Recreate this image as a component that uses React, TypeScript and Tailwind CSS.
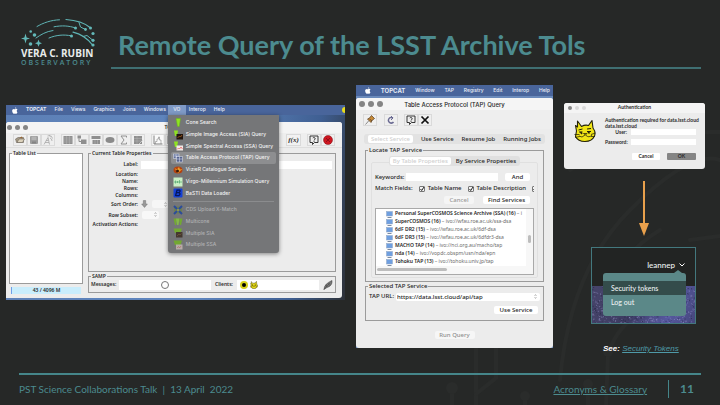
import React from "react";

const lucida = "font-['Noto_Sans','Open_Sans',sans-serif]";

/* ---------- drawings ---------- */

function RubinLogo() {
  return (
    <svg viewBox="0 0 74 29" className="w-full h-auto block" fill="none" stroke="#5fb4b5" strokeLinecap="round" strokeWidth="1" aria-hidden="true">
      <path d="M16 8.500C22 5 30 2 38.500 1.800" />
      <path d="M45 1.500C55 2.200 63 4.500 69 9.500" strokeWidth="1.200" />
      <path d="M33 8.800C41 7.200 48 7.800 54 9.800" />
      <path d="M15 20C20 16.500 25 13.500 32 12.500" />
      <path d="M28 20C35 17 43 16.300 50 17.800" />
      <path d="M52 14.200C60 16 66 20 71.500 27" strokeWidth="1.200" />
      <path d="M58 4.500L59.500 9L64.500 11.500M62 18.500L66 17.500L71.500 22" />
      <g fill="#63b8b8" stroke="none">
        <circle cx="54.500" cy="10" r="1.500" /><circle cx="50.500" cy="18" r="1.500" />
        <circle cx="64.500" cy="11.500" r="1.400" /><circle cx="69.500" cy="10" r="1.500" />
        <circle cx="72" cy="15.500" r="1.600" /><circle cx="72" cy="22.300" r="1.600" />
        <circle cx="72" cy="27" r="1.600" />
        <circle cx="9.700" cy="13.500" r="1.300" /><circle cx="13.500" cy="17" r="1.800" />
        <circle cx="9.500" cy="26" r="1.800" />
        <path d="M4.500 15.500L5.600 19.400L9 20.500L5.600 21.600L4.500 25.500L3.400 21.600L0 20.500L3.400 19.400Z" />
        <path d="M17.500 21.500L18.500 24.200L21 25.200L18.500 26.200L17.500 28.800L16.500 26.200L14 25.200L16.500 24.200Z" />
      </g>
    </svg>
  );
}

function Backdrop() {
  return (
    <svg viewBox="0 0 720 405" preserveAspectRatio="xMaxYMax slice" className="absolute inset-0 w-full h-full" fill="none" stroke="#2a2c2b" strokeWidth="4" strokeLinecap="round" aria-hidden="true">
      <path d="M476 405V350Q476 270 540 205" />
      <path d="M452 405V390M476 394L496 378V340" />
      <path d="M525 405V398M588 405V386M606 405L608 355Q620 310 690 290" />
      <path d="M560 380Q570 270 630 210T720 160" />
      <path d="M570 170Q630 130 720 132M600 320Q610 260 660 230M690 240L720 236" />
      <g fill="#2a2c2b" stroke="none">
        <circle cx="452" cy="388" r="6" /><circle cx="525" cy="396" r="5" />
        <circle cx="588" cy="384" r="5" /><circle cx="608" cy="352" r="5" />
      </g>
    </svg>
  );
}

function Apple() {
  return (
    <svg viewBox="0 0 12 14" className="w-[6px] h-[7px] shrink-0" fill="#fff" aria-hidden="true">
      <path d="M8.300 0.300C8.400 1.900 7.200 3.200 5.900 3.200C5.700 1.800 7 0.500 8.300 0.300ZM10.900 10.400C10.300 12 9.300 13.600 8.200 13.600C7.300 13.600 7 13.100 6 13.100C5 13.100 4.600 13.600 3.800 13.600C2.100 13.600 0.300 10.300 0.300 7.700C0.300 5.200 1.900 3.800 3.500 3.800C4.600 3.800 5.300 4.500 6 4.500C6.700 4.500 7.600 3.700 8.800 3.700C9.700 3.700 10.500 4.200 11 5C8.900 6.200 9.200 9.400 10.900 10.400Z" />
    </svg>
  );
}

function ToolIcon({ kind }: { kind: string }) {
  const g = "#8f8f8f";
  return (
    <svg viewBox="0 0 20 20" className="w-[10px] h-[10px] shrink-0" aria-hidden="true">
      {kind === "open" && <g><path d="M1 8L6 5H17V15H3Z" fill="#a59a86" stroke="#5c554c" /><path d="M4 15L8 8H19L15 15Z" fill="#ddd3bd" stroke="#5c554c" /><path d="M9 5L14 3L15 7Z" fill="#963" /></g>}
      {kind === "save" && <g><rect x="2" y="2" width="16" height="16" rx="2" fill="#9d9d9d" /><rect x="5" y="3" width="10" height="7" fill="#b4b4b4" /><rect x="6" y="13" width="8" height="4" fill="#858585" /></g>}
      {kind === "broadcast" && <g fill="none" stroke="#a5a5a5" strokeWidth="1.500"><path d="M2 19L10 5L13 19M4 15H12M6 11H11" /><path d="M9 2Q13 0 15 3M14 6Q18 7 18 12M12 1Q18 1 19 7" /></g>}
      {kind === "grid" && <g><rect x="1" y="2" width="18" height="16" fill={g} /><path d="M1 6H19M1 10H19M1 14H19M7 2V18M13 2V18" stroke="#b4b4b4" /></g>}
      {kind === "link" && <g fill={g}><rect x="1" y="1" width="7" height="6" /><rect x="8" y="9" width="11" height="9" /><path d="M4 7V13H8" fill="none" stroke={g} strokeWidth="2" /></g>}
      {kind === "columns" && <g><rect x="1" y="2" width="18" height="6" fill={g} /><rect x="3" y="10" width="15" height="8" fill={g} /><path d="M8 10V18M13 10V18" stroke="#bbb" /></g>}
      {kind === "oval" && <ellipse cx="10" cy="10" rx="9" ry="6" fill="#8a8a8a" />}
      {kind === "sum" && <path d="M15 5V2H4L10 10L4 18H15V15" fill="none" stroke="#888" strokeWidth="1.800" />}
      {kind === "match" && <g><rect x="2" y="2" width="16" height="16" fill={g} /><path d="M2 7H18M2 12H18M8 2V18" stroke="#b4b4b4" /><path d="M12 18L19 11" stroke="#ccc" strokeWidth="2" /></g>}
      {kind === "histogram" && <g><rect x="0" y="0" width="20" height="20" fill="#fafafa" /><path d="M2 1V18H19" fill="none" stroke="#555" strokeWidth="1.500" /><path d="M5 18V13H8V8H11V4H13V10H16V18" fill="none" stroke="#777" /></g>}
      {kind === "help" && <g fill="none" stroke="#222" strokeWidth="1.800"><path d="M2 2H18V15H11L7 19V15H2Z" /><path d="M7.500 6Q10 3.500 12 6T10 10V11M10 12V14" strokeWidth="1.500" /></g>}
      {kind === "stop" && <g><circle cx="10" cy="10" r="9" fill="#cf1620" stroke="#7a1015" /><path d="M6 6L14 14M14 6L6 14" stroke="#8f1018" strokeWidth="2" /></g>}
      {kind === "pin" && <g><path d="M1 19L8 11" stroke="#8a8a8a" strokeWidth="2" /><path d="M5 8L9 6L13 1L19 7L14 11L12 15Z" fill="#c88a35" stroke="#5b4126" strokeWidth="1.500" /><path d="M9 8L14 12" stroke="#6b4c2c" strokeWidth="2" /></g>}
      {kind === "reload" && <g fill="none" stroke="#6a6a92" strokeWidth="3"><path d="M14 6Q8 3 5.500 8T9 16Q13 17 15 14" /><path d="M10 10L14 6L10 2" strokeWidth="2" /></g>}
      {kind === "close" && <path d="M3 3L17 17M17 3L3 17" stroke="#111" strokeWidth="3.500" />}
    </svg>
  );
}

function MenuIcon({ kind }: { kind: string }) {
  return (
    <svg viewBox="0 0 20 20" className="w-[10px] h-[10px] shrink-0" aria-hidden="true">
      {kind === "cone" && <path d="M6 1H15L12.500 17H9Z" fill="#8fe321" stroke="#6bb51d" />}
      {kind === "sia" && <g><path d="M2 1H10L8 12H4Z" fill="#8fe321" /><rect x="7" y="8" width="13" height="11" fill="#21150d" /><path d="M9 16L13 12L15 14L18 10" stroke="#b5651d" fill="none" strokeWidth="1.500" /></g>}
      {kind === "ssa" && <g><path d="M2 1H10L8 12H4Z" fill="#8fe321" /><rect x="7" y="9" width="13" height="10" fill="#f3e9e6" /><path d="M8 17L11 14L13 16L16 12L19 16" stroke="#d22" fill="none" /></g>}
      {kind === "tap" && <g fill="none" stroke="#e4e8f4"><rect x="1" y="2" width="11" height="9" fill="#61709a" /><rect x="7" y="7" width="12" height="11" fill="#55638e" /><path d="M1 6H12M6 2V11M7 12H19M13 7V18" /></g>}
      {kind === "vizier" && <g><ellipse cx="10" cy="10" rx="9" ry="7" fill="#b5430f" /><path d="M3 6L8 9L12 4L14 9L19 8L13 13L10 17L7 12Z" fill="#efa12a" /><circle cx="9" cy="12" r="3" fill="#3a190c" /></g>}
      {kind === "virgo" && <g><rect x="1" y="1" width="18" height="18" fill="#c9efc4" /><path d="M2 10H18M5 7V13M9 8V12M13 6V13" stroke="#4ba36b" strokeWidth="1.300" /></g>}
      {kind === "basti" && <g><rect x="1" y="1" width="18" height="18" rx="2" fill="#1540d6" /><path d="M5 16L8 4H13Q16 6 12 9Q16 12 12 15H6M7 9H12" fill="none" stroke="#061759" strokeWidth="2.500" /></g>}
      {kind === "cds" && <g><rect x="2" y="3" width="16" height="14" fill="#6d7f52" /><path d="M2 2L18 18M18 2L2 18" stroke="#2b4c9c" strokeWidth="4" /><circle cx="10" cy="10" r="3" fill="#8c9354" /></g>}
      {kind === "multi" && <g fill="#72a832"><path d="M1 3H8L6 16H4Z" /><path d="M6 3H13L11 16H8Z" fill="#85b84a" /><path d="M12 3H19L16 16H14Z" /></g>}
      {kind === "msia" && <g><path d="M1 1H18L15 10H4Z" fill="#72a832" /><rect x="6" y="8" width="13" height="11" fill="#45382f" /><path d="M8 16L12 12L14 14L17 11" stroke="#8b6543" fill="none" /></g>}
      {kind === "mssa" && <g><path d="M1 1H18L15 10H4Z" fill="#72a832" /><rect x="6" y="9" width="13" height="10" fill="#b7aca8" /><path d="M8 16L11 13L13 16L16 12" stroke="#a55" fill="none" /></g>}
    </svg>
  );
}

function Cat({ className }: { className: string }) {
  return (
    <svg viewBox="0 0 44 46" className={className} aria-hidden="true">
      <path d="M5 23L3 12L7 15L7 3L15 14Q22 10 29 12L36 2L38 17Q44 25 41 33Q36 44 22 44Q8 44 3 34Z" fill="#f0e416" stroke="#24220a" strokeWidth="2.200" strokeLinejoin="round" />
      <path d="M9 21L17 19M26 19L34 18M10 25H17M26 24H34" stroke="#24220a" strokeWidth="2" />
      <path d="M13 25L16 29M28 24L31 28" stroke="#24220a" strokeWidth="3" />
      <path d="M19 28L23 31L26 28ZM22 31Q16 38 10 33M23 31Q30 38 36 31M1 30L11 30M2 36L11 34M34 30L43 27M34 34L42 34" fill="none" stroke="#24220a" strokeWidth="1.500" />
    </svg>
  );
}

/* ---------- shared parts ---------- */

function Lights({ size, gap, faded }: { size: string; gap: string; faded?: boolean }) {
  return (
    <div className={`flex ${gap}`} aria-hidden="true">
      <span className={`${size} rounded-full bg-[#858585]`} />
      <span className={`${size} rounded-full ${faded ? "bg-[#d9d9d9]" : "bg-[#858585]"}`} />
      <span className={`${size} rounded-full ${faded ? "bg-[#d9d9d9]" : "bg-[#858585]"}`} />
    </div>
  );
}

function ToolButton({ kind, label }: { kind: string; label: string }) {
  return (
    <button aria-label={label} className="flex w-[14px] h-[12px] shrink-0 items-center justify-center border border-[#dadada] bg-[#efefef]">
      <ToolIcon kind={kind} />
    </button>
  );
}

function Group({ title, className, children }: { title: string; className?: string; children?: React.ReactNode }) {
  return (
    <fieldset className={`min-w-0 border border-[#9b9b9b] ${className ?? ""}`}>
      <legend className="ml-[2px] px-px leading-[7px]">{title}</legend>
      {children}
    </fieldset>
  );
}

/* ---------- main TOPCAT window ---------- */

const voItems: [string, string][] = [
  ["cone", "Cone Search"],
  ["sia", "Simple Image Access (SIA) Query"],
  ["ssa", "Simple Spectral Access (SSA) Query"],
  ["tap", "Table Access Protocol (TAP) Query"],
  ["vizier", "VizieR Catalogue Service"],
  ["virgo", "Virgo-Millennium Simulation Query"],
  ["basti", "BaSTI Data Loader"],
];
const voDisabled: [string, string][] = [
  ["cds", "CDS Upload X-Match"],
  ["multi", "Multicone"],
  ["msia", "Multiple SIA"],
  ["mssa", "Multiple SSA"],
];

function VoMenu() {
  return (
    <div role="menu" className="absolute left-0 top-full z-10 flex h-[138px] w-[111px] flex-col rounded-b-[3px] bg-[#757678] px-[3px] py-[2px] font-['Inter',sans-serif] text-[5px] font-medium text-[#f2f2f2] shadow-[0_1px_4px_rgba(0,0,0,0.45)]">
      {voItems.map(([kind, text]) => (
        <button key={text} role="menuitem" className={`flex flex-1 items-center gap-[3px] whitespace-nowrap rounded-[2px] px-[2px] ${kind === "tap" ? "bg-[#8d8e90]" : ""}`}>
          <MenuIcon kind={kind} />
          {text}
        </button>
      ))}
      <div className="mx-[2px] my-[2px] h-px bg-[#8b8c8e]" />
      {voDisabled.map(([kind, text]) => (
        <button key={text} role="menuitem" disabled className="flex flex-1 items-center gap-[3px] whitespace-nowrap px-[2px] text-[#b0b1b3]">
          <MenuIcon kind={kind} />
          {text}
        </button>
      ))}
    </div>
  );
}

function Stepper() {
  return (
    <svg viewBox="0 0 6 10" className="w-[3px] h-[5px]" fill="none" stroke="#888" aria-hidden="true">
      <path d="M1 4L3 1L5 4M1 6L3 9L5 6" />
    </svg>
  );
}

function TopcatWindow() {
  return (
    <section className={`mt-[20px] min-w-0 bg-[linear-gradient(100deg,#5d80b6_0%,#5f86bf_60%,#3f5f92_85%,#2d3138_100%)] pb-[2px] text-[5px] font-semibold text-[#2a2a2a] ${lucida}`}>
      <nav className="flex h-[10px] items-center bg-[#49659b] pl-[6px] font-['Inter',sans-serif] font-medium text-[#e6ebf5]">
        <Apple />
        <button className="ml-[8px] font-bold">TOPCAT</button>
        <button className="ml-[8px]">File</button>
        <button className="ml-[8px]">Views</button>
        <button className="ml-[8px]">Graphics</button>
        <button className="ml-[8px]">Joins</button>
        <button className="ml-[8px]">Windows</button>
        <div className="relative ml-[2px] h-full">
          <button className="h-full w-[18px] bg-[#7f9ac6]">VO</button>
          <VoMenu />
        </div>
        <button className="ml-[3px]">Interop</button>
        <button className="ml-[8px]">Help</button>
        <span className="ml-auto h-[6px] w-[3px] rounded-l-full bg-[#e8dc1c]" />
      </nav>
      <div className="mr-[3px] mt-[7px] overflow-hidden rounded-t-[3px] rounded-br-[3px] bg-[#ececec]">
        <header className="relative flex h-[11px] items-center bg-[#f4f4f4] px-px">
          <Lights size="size-[5px]" gap="gap-[3px]" />
          <h2 className="absolute inset-x-0 text-center">TOPCAT</h2>
        </header>
        <div className="flex h-[15px] items-center border-b border-[#dedede] bg-[#eeeeee] px-[7px]">
          <div className="flex">
            <ToolButton kind="open" label="Open table" />
            <ToolButton kind="save" label="Save table" />
            <ToolButton kind="broadcast" label="Broadcast" />
          </div>
          <div className="ml-[6px] flex">
            <ToolButton kind="grid" label="Table data" />
            <ToolButton kind="link" label="Parameters" />
            <ToolButton kind="columns" label="Columns" />
            <ToolButton kind="oval" label="Subsets" />
            <ToolButton kind="sum" label="Statistics" />
            <ToolButton kind="match" label="Activation" />
          </div>
          <div className="ml-[6px] flex">
            <ToolButton kind="histogram" label="Histogram" />
            <ToolButton kind="histogram" label="Plane plot" />
          </div>
          <button className="ml-auto h-[12px] w-[15px] border border-[#dadada] bg-[#f2f2f2] font-['Liberation_Serif',serif] text-[7px] leading-[9px] font-bold italic">f(x)</button>
          <div className="ml-[6px] flex">
            <ToolButton kind="help" label="Help" />
            <ToolButton kind="stop" label="Exit" />
          </div>
        </div>
        <div className="grid grid-cols-[74px_minmax(0,1fr)] gap-[5px] pb-[4px] pl-[3px] pr-[6px] pt-[2px]">
          <div className="flex flex-col gap-[3px]">
            <Group title="Table List" className="flex-1">
              <div className="-mt-[3px] h-[129px] bg-white" />
            </Group>
            <div className="mx-[2px] h-[7px] border-l border-[#6f9fe8] bg-[#c9edfc] text-center leading-[7px]">43 / 4096 M</div>
          </div>
          <div className="flex flex-col gap-px">
            <Group title="Current Table Properties" className="h-[122px]">
              <div className="grid grid-cols-[49px_minmax(0,1fr)] gap-x-[3px] pr-[3px] pt-[2px]">
                <label htmlFor="tbl-label" className="h-[11px] text-right leading-[11px]">Label:</label>
                <input id="tbl-label" className="my-[2px] min-w-0 bg-white" />
                <span className="col-start-1 h-[7px] text-right leading-[7px]">Location:</span>
                <span className="col-start-1 h-[7px] text-right leading-[7px]">Name:</span>
                <span className="col-start-1 h-[7px] text-right leading-[7px]">Rows:</span>
                <span className="col-start-1 h-[7px] text-right leading-[7px]">Columns:</span>
                <span className="col-start-1 h-[11px] text-right leading-[11px]">Sort Order:</span>
                <div className="flex items-center gap-[4px]">
                  <svg viewBox="0 0 12 14" className="w-[7px] h-[8px]" aria-hidden="true"><path d="M4 1H8V7H11L6 13L1 7H4Z" fill="#999" stroke="#777" /></svg>
                  <button aria-label="Sort column" className="flex h-[8px] w-[17px] items-center justify-end rounded-[2px] bg-[#f6f6f6] pr-[2px]"><Stepper /></button>
                </div>
                <span className="col-start-1 h-[10px] text-right leading-[10px]">Row Subset:</span>
                <div className="flex items-center">
                  <button aria-label="Row subset" className="ml-px flex h-[8px] w-[17px] items-center justify-end rounded-[2px] bg-[#f8f8f8] pr-[2px]"><Stepper /></button>
                </div>
                <span className="col-start-1 h-[9px] whitespace-nowrap text-right leading-[9px]">Activation Actions:</span>
              </div>
            </Group>
            <Group title="SAMP" className="h-[20px]">
              <div className="-mt-px flex h-[12px] items-center px-[2px]">
                <span className="w-[28px]">Messages:</span>
                <div className="flex h-[10px] flex-1 items-center justify-center bg-white"><span className="size-[8px] rounded-full border border-[#777]" /></div>
                <span className="mx-[4px]">Clients:</span>
                <div className="flex h-[10px] w-[82px] items-center gap-[2px] bg-white pl-[3px]">
                  <span className="size-[8px] rounded-full border-2 border-[#d6cf1b] bg-black" />
                  <Cat className="h-[8px] w-[8px]" />
                </div>
                <svg viewBox="0 0 20 20" className="ml-[4px] h-[10px] w-[10px]" aria-hidden="true"><path d="M2 19Q2 8 18 1Q19 12 8 15Z" fill="#777" stroke="#333" /><path d="M1 19L14 6M6 9L8 14M10 6L13 11" stroke="#444" fill="none" /></svg>
              </div>
            </Group>
          </div>
        </div>
      </div>
    </section>
  );
}

/* ---------- TAP query window ---------- */

const services: [string, string][] = [
  ["Personal SuperCOSMOS Science Archive (SSA) (16)", "i"],
  ["SuperCOSMOS (16)", "ivo://wfau.roe.ac.uk/ssa-dsa"],
  ["6dF DR2 (15)", "ivo://wfau.roe.ac.uk/6df-dsa"],
  ["6dF DR3 (15)", "ivo://wfau.roe.ac.uk/6dfdr3-dsa"],
  ["MACHO TAP (14)", "ivo://nci.org.au/macho/tap"],
  ["nda (14)", "ivo://vopdc.obspm/usn/nda/epn"],
  ["Tohoku TAP (13)", "ivo://tohoku.univ.jp/tap"],
];

function Check({ text }: { text: string }) {
  return (
    <label className="flex shrink-0 items-center gap-[3px]">
      <span className="relative size-[6px]">
        <input type="checkbox" defaultChecked aria-label={text ? undefined : "Service"} className="peer absolute inset-0 size-[6px] appearance-none rounded-[1px] border border-[#777] bg-[#f4f4f4]" />
        <svg viewBox="0 0 6 6" className="absolute inset-0 hidden size-[6px] peer-checked:block" fill="none" stroke="#222" aria-hidden="true"><path d="M1.500 3L2.700 4.500L5 1" /></svg>
      </span>
      {text}
    </label>
  );
}

const push = "h-[8px] rounded-[2px] text-center leading-[8px]";

function TapWindow() {
  return (
    <section className={`min-w-0 bg-[#6a8abb] text-[6px] font-medium text-[#262626] ${lucida}`}>
      <nav className="flex h-[11px] items-center justify-between overflow-hidden bg-[#49659b] pl-[9px] pr-[3px] font-['Inter',sans-serif] text-[5px] text-[#e6ebf5]">
        <Apple />
        <button className="text-[6px] font-bold">TOPCAT</button>
        <button>Window</button>
        <button>TAP</button>
        <button>Registry</button>
        <button>Edit</button>
        <button>Interop</button>
        <button>Help</button>
      </nav>
      <div className="mt-[2px] overflow-hidden rounded-[3px] bg-[#ececec] pb-[9px]">
        <header className="relative flex h-[12px] items-center bg-[#f5f5f5] px-[3px]">
          <Lights size="size-[6px]" gap="gap-[3px]" />
          <h2 className="absolute inset-x-0 text-center font-['Inter',sans-serif] font-medium">Table Access Protocol (TAP) Query</h2>
        </header>
        <div className="flex h-[19px] items-center bg-[#eeeeee] px-[7px]">
          <ToolButton kind="pin" label="Keep window" />
          <div className="ml-[7px]"><ToolButton kind="reload" label="Reload" /></div>
          <div className="ml-[6px] flex">
            <ToolButton kind="help" label="Help" />
            <ToolButton kind="close" label="Close" />
          </div>
        </div>
        <div role="tablist" className="mx-[8px] mt-[5px] flex h-[10px] items-center justify-between whitespace-nowrap rounded-[3px] bg-[#e2e2e2] pl-[4px] pr-[4px]">
          <button role="tab" aria-selected="true" className="h-[8px] w-[45px] rounded-[2px] bg-white leading-[8px] text-[#cfcfcf]">Select Service</button>
          <button role="tab">Use Service</button>
          <button role="tab">Resume Job</button>
          <button role="tab">Running Jobs</button>
        </div>
        <div className="mx-[9px] mt-[3px]">
          <Group title="Locate TAP Service" className="border-[#8d8d8d]">
            <div className="mx-[5px] mb-[3px] flex flex-col">
              <div role="tablist" className="z-[1] mx-auto mt-[2px] flex h-[10px] items-center gap-[5px] rounded-[3px] bg-[#e0e0e0] pl-px pr-[4px]">
                <button role="tab" aria-selected="true" className="h-[8px] whitespace-nowrap rounded-[2px] bg-white px-[3px] leading-[8px] text-[#cfcfcf]">By Table Properties</button>
                <button role="tab" className="whitespace-nowrap">By Service Properties</button>
              </div>
              <div className="-mt-[4px] rounded-[2px] border border-[#e0e0e0] px-[3px] pb-[2px] pt-[9px]">
                <div className="flex h-[10px] items-center">
                  <label htmlFor="keywords" className="w-[31px]">Keywords:</label>
                  <input id="keywords" className="h-[8px] min-w-0 flex-1 bg-white" />
                  <button className={`${push} ml-[7px] mr-[4px] w-[25px] bg-white`}>And</button>
                </div>
                <div className="mt-[2px] flex h-[9px] items-center gap-[6px] overflow-hidden whitespace-nowrap">
                  <span>Match Fields:</span>
                  <Check text="Table Name" />
                  <Check text="Table Description" />
                  <Check text="" />
                </div>
                <div className="mt-[3px] flex justify-end gap-[9px] pr-[4px]">
                  <button disabled className={`${push} w-[30px] bg-[#f5f5f5] text-[#999]`}>Cancel</button>
                  <button className={`${push} w-[47px] bg-white`}>Find Services</button>
                </div>
                <div className="mt-[4px] h-[67px] overflow-hidden border border-[#a9a9a9] bg-white">
                  <div className="flex h-[57px]">
                    <ul className="min-w-0 flex-1 pl-[10px] pt-px text-[5px] font-semibold">
                      {services.map(([name, uri]) => (
                        <li key={name} className="flex h-[8px] items-center gap-[2px] whitespace-nowrap">
                          <svg viewBox="0 0 14 14" className="size-[7px] shrink-0" aria-hidden="true"><rect x="1" y="1" width="12" height="9" fill="#6f9fe0" stroke="#90a5c4" /><path d="M3 13H11" stroke="#7d8aa0" strokeWidth="2" /></svg>
                          <span>{name} <span className="font-normal text-[#6b6b6b]">– {uri}</span></span>
                        </li>
                      ))}
                    </ul>
                    <div className="w-[7px] bg-[#f7f7f7] px-px pt-[26px]"><div className="mx-px h-[8px] w-[3px] rounded-full bg-[#bdbdbd]" /></div>
                  </div>
                  <div className="h-[8px] bg-[#f7f7f7] px-px pt-[2px]"><div className="h-[3px] w-[70px] rounded-full bg-[#bdbdbd]" /></div>
                </div>
              </div>
            </div>
          </Group>
          <Group title="Selected TAP Service" className="mt-px border-[#8d8d8d]">
            <div className="px-[3px] pb-[6px] pt-[2px]">
              <div className="flex h-[9px] items-center">
                <label htmlFor="tap-url" className="w-[27px] shrink-0">TAP URL:</label>
                <div className="relative min-w-0 flex-1">
                  <select id="tap-url" className="block h-[8px] w-full appearance-none rounded-[2px] bg-white px-px leading-[8px]">
                    <option>https://data.lsst.cloud/api/tap</option>
                  </select>
                  <span className="pointer-events-none absolute right-[3px] top-px"><Stepper /></span>
                </div>
              </div>
              <div className="mt-[5px] flex justify-end"><button className={`${push} mr-[2px] w-[44px] bg-white`}>Use Service</button></div>
            </div>
          </Group>
        </div>
        <div className="mt-[10px] flex justify-center"><button disabled className={`${push} w-[40px] bg-[#f6f6f6] text-[#8f8f8f]`}>Run Query</button></div>
      </div>
    </section>
  );
}

/* ---------- right column ---------- */

function AuthDialog() {
  return (
    <section className="mt-[18px] overflow-hidden rounded-[3px] bg-[#ececec] font-['Lato',sans-serif] text-[5px] font-bold text-[#2b2b2b]">
      <header className="relative flex h-[10px] items-center bg-[#f4f4f4] px-[4px]">
        <Lights size="size-[4px]" gap="gap-[3px]" faded />
        <h2 className="absolute inset-x-0 text-center font-bold">Authentication</h2>
      </header>
      <div className="flex pb-[9px] pl-[10px] pr-[9px] pt-[4px]">
        <Cat className="mt-[2px] h-[24px] w-[22px] shrink-0" />
        <div className="ml-[9px] min-w-0 flex-1">
          <p className="whitespace-nowrap leading-[6px]">Authentication required for data.lsst.cloud<br />data.lsst.cloud</p>
          <div className="grid grid-cols-[22px_minmax(0,1fr)] gap-x-[4px] gap-y-[4px]">
            <label htmlFor="auth-user" className="text-right leading-[6px]">User:</label>
            <input id="auth-user" className="h-[6px] min-w-0 bg-white" />
            <label htmlFor="auth-pass" className="text-right leading-[6px]">Password:</label>
            <input id="auth-pass" type="password" className="h-[6px] min-w-0 bg-white" />
          </div>
          <div className="mt-[8px] flex justify-end gap-[7px]">
            <button className="h-[7px] w-[28px] rounded-[1px] bg-white leading-[7px]">Cancel</button>
            <button className="h-[7px] w-[29px] rounded-[1px] bg-[#858585] leading-[7px]">OK</button>
          </div>
        </div>
      </div>
    </section>
  );
}

function noise(n: number) {
  const v = Math.sin(n * 127.1) * 43758.5453;
  return v - Math.floor(v);
}

function StarField() {
  return (
    <svg viewBox="0 0 103 37" preserveAspectRatio="none" className="block h-[37px] w-full bg-[linear-gradient(110deg,#46446a,#3d3c62_40%,#5658a0_75%,#46477c)]" aria-hidden="true">
      {Array.from({ length: 700 }, (_, i) => (
        <rect key={i} x={noise(i + 1) * 103} y={noise(i + 2000) * 37} width="1" height="1" fill={i % 3 ? "#a9a8dd" : "#191a33"} opacity={0.15 + noise(i + 5000) * 0.45} />
      ))}
    </svg>
  );
}

function AccountPanel() {
  return (
    <div className="relative w-full border border-[#43787e] bg-[#222423] font-['Lato',sans-serif] text-[7px] text-[#edf2f2]">
      <div className="flex h-[38px] items-start justify-end pr-[10px] pt-[12px]">
        <button className="flex items-center gap-[4px] text-[8px] leading-[10px] font-medium">
          leannep
          <svg viewBox="0 0 12 8" className="w-[6px] h-[4px]" fill="none" stroke="#fff" strokeWidth="2" aria-hidden="true"><path d="M1 1L6 6L11 1" /></svg>
        </button>
      </div>
      <StarField />
      <div role="menu" className="absolute left-[11px] right-[9px] top-[25px] flex h-[43px] flex-col rounded-[3px] bg-[#5b8888] pt-[8px]">
        <span className="absolute -top-[3px] right-[4px] border-x-[4px] border-b-[3px] border-x-transparent border-b-[#5b8888]" />
        <button role="menuitem" className="h-[14px] bg-[#344c4b] pl-[8px] text-left font-medium leading-[14px]">Security tokens</button>
        <button role="menuitem" className="h-[14px] pl-[8px] text-left font-medium leading-[14px]">Log out</button>
      </div>
    </div>
  );
}

export default function App() {
  return (
    <div className="relative flex min-h-screen flex-col overflow-hidden bg-[#262827] font-['Lato',sans-serif] text-[#4c8b8f]">
      <Backdrop />
      <header className="relative flex h-[85px] pl-[21px] pr-[19px]">
        <div className="w-[74px] shrink-0 pt-[18px]">
          <RubinLogo />
          <div className="mt-px whitespace-nowrap font-['Open_Sans',sans-serif] text-[10px] leading-[11px] font-bold text-[#e8ebeb]">VERA C. RUBIN</div>
          <div className="whitespace-nowrap font-['Open_Sans',sans-serif] text-[7px] leading-[8px] font-semibold tracking-[2px]">OBSERVATORY</div>
        </div>
        <div className="ml-[16px] h-[69px] flex-1 border-b-2 border-[#3f6f72] pl-[7px] pt-[28px]">
          <h1 className="whitespace-nowrap text-[27px] leading-[34px] font-bold">Remote Query of the LSST Archive Tols</h1>
        </div>
      </header>
      <main className="relative grid flex-1 grid-cols-[minmax(0,339fr)_minmax(0,197fr)_minmax(0,141fr)] items-start gap-[11px] pl-[6px] pr-[15px]">
        <TopcatWindow />
        <TapWindow />
        <div className="flex min-w-0 flex-col">
          <AuthDialog />
          <div className="ml-[27px] mr-[9px] flex flex-col items-center">
            <svg viewBox="0 0 12 56" className="mb-[10px] mt-[12px] h-[56px] w-[12px]" aria-hidden="true">
              <path d="M6 0V44" stroke="#e8a04c" strokeWidth="2" />
              <path d="M1 42H11L6 55Z" fill="#e8a04c" />
            </svg>
            <AccountPanel />
            <p className="mt-[19px] w-full whitespace-nowrap pl-[12px] font-['Liberation_Sans',sans-serif] text-[8px] leading-[11px] italic">
              <b className="text-white">See:</b> <a href="#tokens" className="text-[#4f9aa8] underline">Security Tokens</a>
            </p>
          </div>
        </div>
      </main>
      <footer className="relative mx-[19px] flex h-[32px] items-center border-t-2 border-[#45868a] pb-[2px] text-[10px]">
        <span className="whitespace-pre">PST Science Collaborations Talk  |  13 April  2022</span>
        <a href="#glossary" className="ml-auto underline">Acronyms &amp; Glossary</a>
        <span className="ml-[21px] flex h-[18px] items-center border-l border-[#45868a] pl-[11px] pr-[7px] text-[12px] font-bold">11</span>
      </footer>
    </div>
  );
}
